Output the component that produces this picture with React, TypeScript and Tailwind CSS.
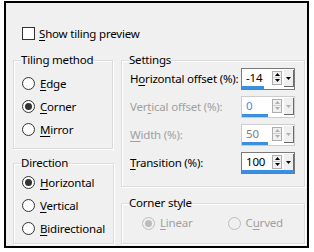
import React from "react";

function U({ children }: { children: React.ReactNode }) {
  return <span className="underline decoration-1 underline-offset-[2px]">{children}</span>;
}

function Radio({ checked, disabled }: { checked?: boolean; disabled?: boolean }) {
  return (
    <span
      className={`w-[13px] h-[13px] shrink-0 rounded-full border flex items-center justify-center ${
        disabled ? "border-[#bcbcbc] bg-[#f0f0f0]" : "border-[#333333] bg-white"
      }`}
    >
      {checked && (
        <span className={`w-[7px] h-[7px] rounded-full ${disabled ? "bg-[#bcbcbc]" : "bg-[#333333]"}`} />
      )}
    </span>
  );
}

function RadioRow({
  label,
  checked,
  disabled,
}: {
  label: React.ReactNode;
  checked?: boolean;
  disabled?: boolean;
}) {
  return (
    <div className={`h-[23px] flex items-center gap-[5px] ${disabled ? "text-[#a0a0a0]" : "text-black"}`}>
      <Radio checked={checked} disabled={disabled} />
      <span>{label}</span>
    </div>
  );
}

function Group({
  title,
  className,
  children,
}: {
  title: string;
  className?: string;
  children: React.ReactNode;
}) {
  return (
    <fieldset
      className={`border border-[#dcdcdc] shadow-[1px_1px_0_#ffffff,inset_1px_1px_0_#ffffff] px-[8px] ${className ?? ""}`}
    >
      <legend className="ml-[-1px] h-[16px] leading-[16px] bg-[#f0f0f0] text-black">{title}</legend>
      {children}
    </fieldset>
  );
}

function Arrow({ dir, disabled }: { dir: "up" | "down"; disabled?: boolean }) {
  const c = disabled ? "#b0b0b0" : "#000000";
  return (
    <svg width="5" height="3" viewBox="0 0 5 3" className="block">
      {dir === "up" ? <path d="M0 3 L2.5 0 L5 3 Z" fill={c} /> : <path d="M0 0 L5 0 L2.5 3 Z" fill={c} />}
    </svg>
  );
}

function Spin({
  value,
  pct,
  disabled,
  valueClass,
}: {
  value: string;
  pct: number;
  disabled?: boolean;
  valueClass?: string;
}) {
  return (
    <div
      className={`w-[54px] h-[22px] shrink-0 border ${
        disabled ? "border-[#cccccc]" : "border-[#7a7a7a]"
      } bg-white flex flex-col`}
    >
      <div className="flex-1 flex items-center pr-[1px]">
        <span className={`flex-1 pl-[4px] leading-[14px] ${valueClass ?? "text-black"}`}>{value}</span>
        <div className="w-[10px] h-[14px] border border-[#adadad] bg-[#f0f0f0] flex flex-col">
          <div className="flex-1 flex items-center justify-center border-b border-[#d0d0d0]">
            <Arrow dir="up" disabled={disabled} />
          </div>
          <div className="flex-1 flex items-center justify-center">
            <Arrow dir="down" disabled={disabled} />
          </div>
        </div>
        <div className="ml-[1px] w-[10px] h-[17px] bg-[#f0f0f0] border-t border-l border-[#ffffff] shadow-[1px_1px_0_#696969] flex items-center justify-center">
          <Arrow dir="down" disabled={disabled} />
        </div>
      </div>
      <div className="h-[3px] flex">
        <div className="h-full bg-[#3b8fe0]" style={{ width: `${pct}%` }} />
      </div>
    </div>
  );
}

function SettingRow({
  label,
  disabled,
  children,
}: {
  label: React.ReactNode;
  disabled?: boolean;
  children: React.ReactNode;
}) {
  return (
    <div className="h-[22px] flex items-center justify-between">
      <span className={`whitespace-nowrap ${disabled ? "text-[#a0a0a0]" : "text-black"}`}>{label}</span>
      {children}
    </div>
  );
}

export default function App() {
  return (
    <div className="w-[314px] h-[252px] bg-white pt-[1px] pl-[4px] font-['Noto_Sans',sans-serif] text-[11.5px] tracking-[-0.2px] leading-[16px]">
      <div className="w-[305px] h-[247px] border-2 border-black bg-[#f0f0f0] overflow-hidden">
        <div className="pl-[16px] pt-[23px] h-[49px] flex items-start gap-[4px]">
          <span className="w-[13px] h-[13px] border border-[#333333] bg-white mt-[1px]" />
          <span>
            <U>S</U>how tiling preview
          </span>
        </div>
        <div className="pl-[7px] flex gap-[8px]">
          <div className="w-[100px] flex flex-col gap-[6px]">
            <Group title="Tiling method" className="h-[97px]">
              <div className="mt-[4px]">
                <RadioRow label={<><U>E</U>dge</>} />
                <RadioRow label={<><U>C</U>orner</>} checked />
                <RadioRow label={<><U>M</U>irror</>} />
              </div>
            </Group>
            <Group title="Direction" className="h-[89px]">
              <RadioRow label={<><U>H</U>orizontal</>} checked />
              <RadioRow label={<><U>V</U>ertical</>} />
              <RadioRow label={<><U>B</U>idirectional</>} />
            </Group>
          </div>
          <div className="w-[184px] flex flex-col gap-[8px]">
            <Group title="Settings" className="h-[135px] pr-[9px]">
              <div className="flex flex-col gap-[6px]">
                <SettingRow label={<>H<U>o</U>rizontal offset (%):</>}>
                  <Spin value="-14" pct={43} />
                </SettingRow>
                <SettingRow label={<>Ver<U>t</U>ical offset (%):</>} disabled>
                  <Spin value="0" pct={50} disabled valueClass="text-[#3b8fe0]" />
                </SettingRow>
                <SettingRow label={<><U>W</U>idth (%):</>} disabled>
                  <Spin value="50" pct={50} disabled valueClass="text-[#808080]" />
                </SettingRow>
                <SettingRow label={<><U>T</U>ransition (%):</>}>
                  <Spin value="100" pct={100} />
                </SettingRow>
              </div>
            </Group>
            <Group title="Corner style" className="h-[49px]">
              <div className="mt-[4px] pl-[12px] flex gap-[35px]">
                <div className="h-[16px] flex items-center gap-[5px] text-[#a0a0a0]">
                  <Radio checked disabled />
                  <span>
                    <U>L</U>inear
                  </span>
                </div>
                <div className="h-[16px] flex items-center gap-[5px] text-[#a0a0a0]">
                  <Radio disabled />
                  <span>
                    C<U>u</U>rved
                  </span>
                </div>
              </div>
            </Group>
          </div>
        </div>
      </div>
    </div>
  );
}
